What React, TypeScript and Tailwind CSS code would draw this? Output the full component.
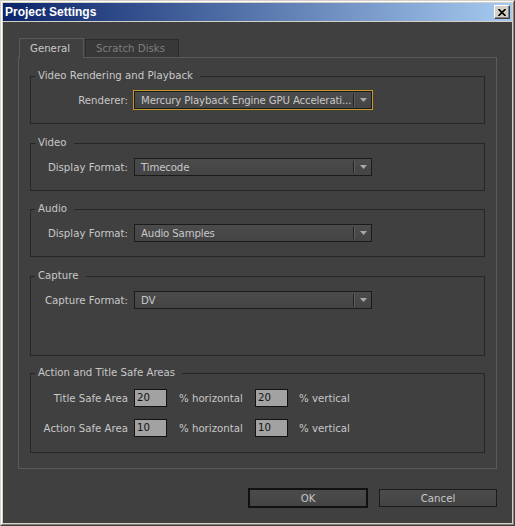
import React from "react";

function Arrow() {
  return (
    <svg width="7" height="4" viewBox="0 0 7 4" className="block">
      <path d="M0 0 H7 L3.5 4 Z" fill="#a9a9a9" />
    </svg>
  );
}

function Dropdown({ text, focused }: { text: string; focused?: boolean }) {
  return (
    <div
      className={
        "ml-[6px] flex h-[18px] w-[238px] items-center border border-[#1b1b1b] bg-[linear-gradient(#4b4b4b,#444444)] " +
        (focused ? "ring-1 ring-[#c9962a]" : "")
      }
    >
      <div className="min-w-0 flex-1 overflow-hidden whitespace-nowrap pl-[6px] pt-px leading-[16px] tracking-[-0.15px] text-[#c8c8c8]">
        {text}
      </div>
      <div className="h-[12px] w-[2px] border-l border-r border-l-[#222222] border-r-[#5e5e5e]" />
      <div className="flex h-full w-[16px] items-center justify-center">
        <Arrow />
      </div>
    </div>
  );
}

function Group({
  title,
  className,
  children,
}: {
  title: string;
  className?: string;
  children: React.ReactNode;
}) {
  return (
    <fieldset className={"border border-[#262626] " + (className ?? "")}>
      <legend className="ml-[4px] pl-[3px] pr-[7px] leading-[14px] text-[#c8c8c8]">
        {title}
      </legend>
      {children}
    </fieldset>
  );
}

function Label({ children }: { children: React.ReactNode }) {
  return (
    <div className="w-[97px] shrink-0 whitespace-nowrap pt-px text-right text-[#c8c8c8]">
      {children}
    </div>
  );
}

function Box({ value }: { value: string }) {
  return (
    <div className="h-[18px] w-[33px] shrink-0 border border-[#121212] bg-[#a2a2a2] pl-[2px] leading-[16px] text-[#141414]">
      {value}
    </div>
  );
}

function SafeRow({ label, h, v }: { label: string; h: string; v: string }) {
  return (
    <div className="flex h-[18px] items-center">
      <Label>{label}</Label>
      <div className="ml-[6px]">
        <Box value={h} />
      </div>
      <div className="ml-[12px] w-[76px] whitespace-nowrap pt-px text-[#c8c8c8]">% horizontal</div>
      <Box value={v} />
      <div className="ml-[11px] whitespace-nowrap pt-px text-[#c8c8c8]">% vertical</div>
    </div>
  );
}

export default function App() {
  return (
    <div className="h-[526px] w-[515px] border border-t-[#d4d0c8] border-l-[#d4d0c8] border-r-[#404040] border-b-[#404040] bg-[#d4d0c8] font-['DejaVu_Sans',sans-serif] text-[10.2px]">
      <div className="flex h-full flex-col border border-t-white border-l-white border-r-[#808080] border-b-[#808080] p-px">
        {/* Title bar */}
        <div className="flex h-[18px] shrink-0 items-center justify-between bg-[linear-gradient(to_right,#0a246a,#a6caf0)] pl-[2px]">
          <span className="font-['Liberation_Sans',sans-serif] text-[12px] font-bold text-white">
            Project Settings
          </span>
          <div className="mr-[2px] flex h-[14px] w-[16px] items-center justify-center border border-t-white border-l-white border-r-[#404040] border-b-[#404040] bg-[#d4d0c8] shadow-[inset_-1px_-1px_#808080]">
            <svg width="8" height="7" viewBox="0 0 8 7" className="block">
              <path d="M0.5 0 L7.5 7 M7.5 0 L0.5 7" stroke="#000" strokeWidth="1.6" />
            </svg>
          </div>
        </div>

        {/* Body */}
        <div className="mt-px flex flex-1 flex-col bg-[#404040] px-[15px] pt-[16px]">
          {/* Tabs */}
          <div className="relative z-10 flex h-[19px] items-end">
            <div className="ml-[1px] -mb-px h-[20px] w-[65px] border border-b-0 border-t-[#5a5a5a] border-l-[#5a5a5a] border-r-[#5a5a5a] bg-[#404040] pl-[10px] leading-[19px] text-[#c8c8c8]">
              General
            </div>
            <div className="ml-[1px] h-[18px] w-[94px] border border-b-0 border-t-[#2a2a2a] border-l-[#2a2a2a] border-r-[#2a2a2a] bg-[#383838] pl-[10px] leading-[18px] text-[#7e7e7e]">
              Scratch Disks
            </div>
          </div>

          {/* Panel */}
          <div className="border border-[#5a5a5a] px-[11px] pb-[15px] pt-[11px]">
            <Group title="Video Rendering and Playback" className="pb-[14px] pt-[8px]">
              <div className="flex h-[18px] items-center">
                <Label>Renderer:</Label>
                <Dropdown text="Mercury Playback Engine GPU Accelerati..." focused />
              </div>
            </Group>

            <Group title="Video" className="mt-[12px] pb-[14px] pt-[8px]">
              <div className="flex h-[18px] items-center">
                <Label>Display Format:</Label>
                <Dropdown text="Timecode" />
              </div>
            </Group>

            <Group title="Audio" className="mt-[11px] pb-[14px] pt-[8px]">
              <div className="flex h-[18px] items-center">
                <Label>Display Format:</Label>
                <Dropdown text="Audio Samples" />
              </div>
            </Group>

            <Group title="Capture" className="mt-[12px] pb-[46px] pt-[8px]">
              <div className="flex h-[18px] items-center">
                <Label>Capture Format:</Label>
                <Dropdown text="DV" />
              </div>
            </Group>

            <Group title="Action and Title Safe Areas" className="mt-[10px] pb-[15px] pt-[9px]">
              <div className="flex flex-col gap-[12px]">
                <SafeRow label="Title Safe Area" h="20" v="20" />
                <SafeRow label="Action Safe Area" h="10" v="10" />
              </div>
            </Group>
          </div>

          {/* Buttons */}
          <div className="mt-[19px] flex items-center justify-end">
            <div className="flex h-[20px] w-[120px] items-center justify-center border-2 border-[#111111] bg-[linear-gradient(#4b4b4b,#444444)] pt-px text-[#c8c8c8]">
              OK
            </div>
            <div className="ml-[11px] flex h-[18px] w-[118px] items-center justify-center border border-[#1b1b1b] bg-[linear-gradient(#4b4b4b,#444444)] pt-px text-[#c8c8c8]">
              Cancel
            </div>
          </div>
        </div>
      </div>
    </div>
  );
}
